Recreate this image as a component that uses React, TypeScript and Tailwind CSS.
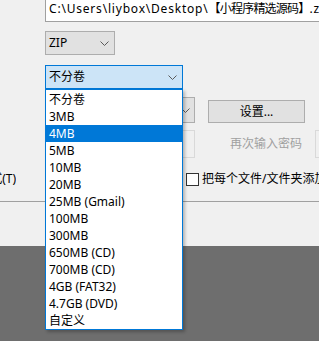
import React from "react";

const sizes = [
  "不分卷",
  "3MB",
  "4MB",
  "5MB",
  "10MB",
  "20MB",
  "25MB (Gmail)",
  "100MB",
  "300MB",
  "650MB (CD)",
  "700MB (CD)",
  "4GB (FAT32)",
  "4.7GB (DVD)",
  "自定义",
];

const Chevron = () => (
  <svg width="9" height="5" viewBox="0 0 9 5" className="shrink-0">
    <path d="M0.5 0.5 L4.5 4.5 L8.5 0.5" fill="none" stroke="#5a5a5a" strokeWidth="1" />
  </svg>
);

export default function App() {
  return (
    <div
      className="relative w-[319px] h-[341px] overflow-hidden bg-[#f0f0f0] text-[12px] text-black flex flex-col"
      style={{ fontFamily: '"Segoe UI", "Noto Sans", "Noto Sans CJK SC", sans-serif' }}
    >
      {/* Dialog body */}
      <div className="h-[201px] flex flex-col shrink-0">
        {/* Archive path */}
        <div className="mt-[-8px] ml-[45px] w-[300px] h-[30px] shrink-0 border border-[#a0a0a0] bg-white flex items-center pl-[3px] pt-[4px] whitespace-nowrap">
          <span className="tracking-[0.8px]">C:\Users\liybox\Desktop\</span>
          <span className="tracking-[-0.8px]">【小程序精选源码】</span>
          <span className="tracking-[0.8px]">.zip</span>
        </div>

        {/* Format */}
        <div className="mt-[9px] ml-[45px] w-[70px] h-[24px] shrink-0 border border-[#adadad] bg-[#e1e1e1] flex items-center justify-between pl-[3px] pr-[5px]">
          <span>ZIP</span>
          <Chevron />
        </div>

        {/* Split size (open) */}
        <div className="mt-[10px] ml-[45px] w-[138px] h-[24px] shrink-0 border border-[#0078d7] bg-[#cce4f7] flex items-center justify-between pl-[3px] pr-[5px]">
          <span>不分卷</span>
          <Chevron />
        </div>

        {/* Hidden combo + settings button */}
        <div className="mt-[8px] h-[26px] shrink-0 flex">
          <div className="ml-[100px] w-[95px] h-[26px] shrink-0 border border-[#adadad] bg-[#e1e1e1] flex items-center justify-end pr-[4px]">
            <Chevron />
          </div>
          <div className="ml-[13px] mt-[3px] w-[97px] h-[23px] shrink-0 border border-[#adadad] bg-[#e1e1e1] flex items-center justify-center">
            设置...
          </div>
        </div>

        {/* Password row */}
        <div className="mt-[7px] h-[28px] shrink-0 flex items-center">
          <div className="ml-[100px] w-[95px] h-[28px] shrink-0 border border-[#d9d9d9] bg-[#f0f0f0]" />
          <span className="ml-[35px] shrink-0 text-[#a0a0a0] whitespace-nowrap">再次输入密码</span>
          <div className="ml-[13px] w-[40px] h-[28px] shrink-0 border border-[#d9d9d9]" />
        </div>

        {/* Options row */}
        <div className="mt-[14px] h-[14px] shrink-0 flex items-center whitespace-nowrap">
          <div className="w-[16px] shrink-0 flex justify-end overflow-hidden">
            <span className="shrink-0">式(T)</span>
          </div>
          <div className="ml-[170px] w-[13px] h-[13px] shrink-0 border border-[#333333] bg-white" />
          <span className="ml-[3px] shrink-0">把每个文件/文件夹添加到单独的压缩文件</span>
        </div>
      </div>

      <div className="h-[45px] shrink-0 border-t border-[#a0a0a0]" />
      <div className="flex-1 bg-[#6e6e6e]" />

      {/* Open dropdown list */}
      <div className="absolute left-[45px] top-[89px] w-[138px] h-[241px] border border-[#0078d7] bg-white pt-[1px] shadow-[2px_2px_3px_rgba(0,0,0,0.25)]">
        {sizes.map((s) => (
          <div
            key={s}
            className={
              s === "4MB"
                ? "h-[17px] leading-[17px] pl-[3px] bg-[#0078d7] text-white whitespace-nowrap"
                : "h-[17px] leading-[17px] pl-[3px] whitespace-nowrap"
            }
          >
            {s}
          </div>
        ))}
      </div>
    </div>
  );
}
